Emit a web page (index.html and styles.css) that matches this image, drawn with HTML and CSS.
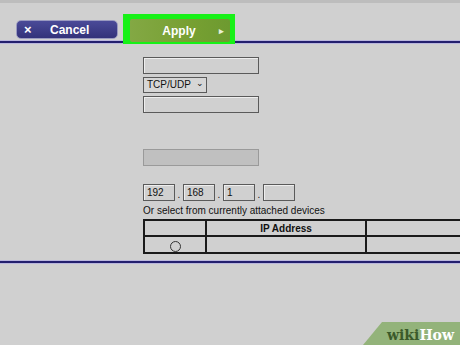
FILE: index.html
```html
<html>
<head>
<link rel="stylesheet" href="styles.css">
</head>
<body>
<div class="topStrip"></div>

<div class="toolbar">
	<div class="btn cancelBtn"><span class="btnIcon">&times;</span><span class="btnText">Cancel</span></div>
	<div class="highlight">
		<div class="btn applyBtn"><span class="btnText">Apply</span><span class="btnArrow">&#9656;</span></div>
	</div>
</div>

<div class="form">
	<div class="field"></div>
	<div class="select">TCP/UDP <span class="caret">&#8964;</span></div>
	<div class="field"></div>
	<div class="field disabled"></div>

	<div class="ipRow">
		<div class="ipBox">192</div><span class="dot">.</span>
		<div class="ipBox">168</div><span class="dot">.</span>
		<div class="ipBox">1</div><span class="dot">.</span>
		<div class="ipBox"></div>
	</div>
	<div class="hint">Or select from currently attached devices</div>

	<table class="devices">
		<tr>
			<th class="colSel"></th>
			<th class="colIp">IP Address</th>
			<th class="colRest"></th>
		</tr>
		<tr>
			<td class="colSel"><span class="radio"></span></td>
			<td class="colIp"></td>
			<td class="colRest"></td>
		</tr>
	</table>
</div>

<div class="bottomLine"></div>

<div class="wikiBadge"><span class="wiki">wiki</span><span class="how">How</span></div>
</body>
</html>
```

FILE: styles.css
```css
body {
	margin: 0;
	background-color: #d0d0d0;
	font-family: "Liberation Sans", Arial, sans-serif;
	color: #111;
	overflow: hidden;
	height: 345px;
	position: relative;
}

.topStrip {
	height: 3px;
	background-color: #bdbdbd;
}

.toolbar {
	display: flex;
	align-items: flex-start;
	height: 38px;
	padding-left: 16px;
	border-bottom: 2px solid #231f6e;
	box-shadow: 0 1px 0 #b9b6dd, inset 0 -1px 0 #b9b6dd;
}

.btn {
	display: flex;
	align-items: center;
	height: 18px;
	color: white;
	font-weight: bold;
	font-size: 12px;
	border-radius: 5px;
}

.cancelBtn {
	margin-top: 17px;
	width: 102px;
	background: linear-gradient(#4a4a98, #33327a);
	border: 1px solid #9a9ac0;
	box-sizing: border-box;
	height: 19px;
}

.cancelBtn .btnIcon {
	font-size: 13px;
	margin-left: 7px;
	width: 26px;
}

.highlight {
	margin-top: 11px;
	margin-left: 5px;
	padding: 5px 5px 2px 7px;
	background-color: #17f117;
	position: relative;
}

.applyBtn {
	width: 100px;
	height: 23px;
	border-radius: 2px;
	background: linear-gradient(90deg, #83a844, #77a032 60%, #6d9a30);
	justify-content: center;
	position: relative;
}

.applyBtn .btnText {
	margin-right: 2px;
}

.btnArrow {
	position: absolute;
	right: 6px;
	font-size: 9px;
	color: #e8f0d8;
}

.form {
	margin-left: 143px;
	padding-top: 14px;
	display: flex;
	flex-direction: column;
	align-items: flex-start;
}

.field {
	width: 116px;
	height: 17px;
	box-sizing: border-box;
	border: 1px solid #5a5a5a;
	box-shadow: inset 1px 1px 0 #eee;
}

.field.disabled {
	margin-top: 36px;
	background-color: #c0c0c0;
	border-color: #9a9a9a;
	box-shadow: none;
}

.select {
	margin: 3px 0 3px 0;
	width: 64px;
	height: 16px;
	box-sizing: border-box;
	border: 1px solid #5a5a5a;
	font-size: 10px;
	line-height: 14px;
	padding-left: 3px;
	background-color: #d6d6d6;
}

.caret {
	font-size: 9px;
	margin-left: 2px;
	position: relative;
	top: -2px;
}

.ipRow {
	margin-top: 18px;
	display: flex;
	align-items: flex-end;
}

.ipBox {
	width: 32px;
	height: 17px;
	box-sizing: border-box;
	border: 1px solid #5a5a5a;
	box-shadow: inset 1px 1px 0 #eee;
	font-size: 10px;
	line-height: 15px;
	padding-left: 3px;
}

.dot {
	width: 8px;
	text-align: center;
	font-size: 10px;
	line-height: 12px;
}

.hint {
	font-size: 10px;
	margin-top: 4px;
	margin-bottom: 3px;
}

.devices {
	border-collapse: collapse;
	width: 318px;
	font-size: 10px;
}

.devices th, .devices td {
	border: 2px solid #1a1a1a;
	height: 16px;
	padding: 0;
}

.devices .colRest {
	border-right: none;
}

.devices th {
	font-weight: bold;
	text-align: center;
}

.colSel {
	width: 60px;
	text-align: center;
}

.colIp {
	width: 158px;
}

.radio {
	display: inline-block;
	width: 9px;
	height: 9px;
	border: 1px solid #333;
	border-radius: 50%;
	margin-top: 4px;
}

.bottomLine {
	margin-top: 7px;
	height: 2px;
	background-color: #231f6e;
	box-shadow: 0 1px 0 #b9b6dd, 0 -1px 0 #b9b6dd;
}

.wikiBadge {
	position: absolute;
	right: 0;
	bottom: 0;
	width: 97px;
	height: 23px;
	box-sizing: border-box;
	background-color: #93b37a;
	clip-path: polygon(19px 0, 100% 0, 100% 100%, 0 100%);
	padding-left: 24px;
	font-family: "DejaVu Serif", "Liberation Serif", serif;
	font-weight: bold;
	font-size: 14px;
	line-height: 26px;
	white-space: nowrap;
}

.wiki {
	color: #3b5a2a;
}

.how {
	color: white;
}
```
